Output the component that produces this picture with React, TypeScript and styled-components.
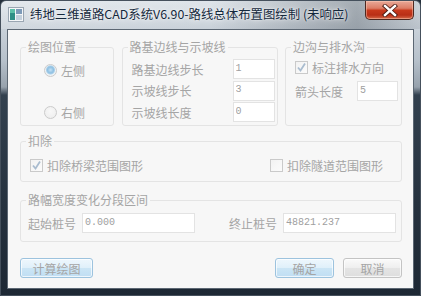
import React from 'react';
import styled, {createGlobalStyle} from "styled-components";

const GlobalStyle = createGlobalStyle`
  html, body {
    margin: 0;
    padding: 0;
    background: #25303c;
  }
  * {
    box-sizing: border-box;
  }
`

const TEXT_GREY = '#a5a5a5'

const AppIcon = () => (
    <svg width="16" height="15" viewBox="0 0 16 15">
        <rect x="0.5" y="0.5" width="15" height="14" fill="#f4f6f8" stroke="#9aa6b2"/>
        <rect x="2" y="2" width="5" height="11" fill="#2f8f86"/>
        <rect x="2" y="2" width="5" height="4" fill="#5cc0a8"/>
        <rect x="8" y="2" width="6" height="5" fill="#7c9ab8"/>
        <rect x="8" y="8" width="6" height="5" fill="#c3d0dc"/>
    </svg>
)

const CloseGlyph = () => (
    <svg width="16" height="13" viewBox="0 0 16 13">
        <path d="M3 2 L13 11 M13 2 L3 11" stroke="#4a1a12" strokeWidth="4.2" strokeLinecap="square"/>
        <path d="M3 2 L13 11 M13 2 L3 11" stroke="#ffffff" strokeWidth="2.4" strokeLinecap="square"/>
    </svg>
)

const CheckMark = () => (
    <svg width="11" height="11" viewBox="0 0 11 11">
        <path d="M2 5.5 L4.5 8.5 L9 1.5" fill="none" stroke="#a9bccf" strokeWidth="1.8"/>
    </svg>
)

const Radio: React.FC<{checked?: boolean, label: string}> = ({checked, label}) => (
    <StyledOption>
        <StyledRadio checked={checked}/>
        <span>{label}</span>
    </StyledOption>
)

const Check: React.FC<{checked?: boolean, label: string}> = ({checked, label}) => (
    <StyledOption>
        <StyledCheckBox>{checked && <CheckMark/>}</StyledCheckBox>
        <span>{label}</span>
    </StyledOption>
)

export default function App() {
    return (
        <>
            <GlobalStyle/>
            <StyledWindow>
                <StyledTitleBar>
                    <StyledIconWrap><AppIcon/></StyledIconWrap>
                    <StyledTitle>纬地三维道路CAD系统V6.90-路线总体布置图绘制 (未响应)</StyledTitle>
                    <StyledCloseButton><CloseGlyph/></StyledCloseButton>
                </StyledTitleBar>

                <StyledClient>
                    <StyledTopRow>
                        <StyledGroup width={94} height={86}>
                            <StyledLegend>绘图位置</StyledLegend>
                            <StyledRadioColumn>
                                <Radio checked label="左侧"/>
                                <Radio label="右侧"/>
                            </StyledRadioColumn>
                        </StyledGroup>

                        <StyledGroup width={156} height={86}>
                            <StyledLegend>路基边线与示坡线</StyledLegend>
                            <StyledFieldGrid>
                                <StyledLabel>路基边线步长</StyledLabel>
                                <StyledInput readOnly defaultValue="1"/>
                                <StyledLabel>示坡线步长</StyledLabel>
                                <StyledInput readOnly defaultValue="3"/>
                                <StyledLabel>示坡线长度</StyledLabel>
                                <StyledInput readOnly defaultValue="0"/>
                            </StyledFieldGrid>
                        </StyledGroup>

                        <StyledGroup width={117} height={86}>
                            <StyledLegend>边沟与排水沟</StyledLegend>
                            <StyledDrainBody>
                                <Check checked label="标注排水方向"/>
                                <StyledInlineField>
                                    <StyledLabel>箭头长度</StyledLabel>
                                    <StyledShortInput readOnly defaultValue="5"/>
                                </StyledInlineField>
                            </StyledDrainBody>
                        </StyledGroup>
                    </StyledTopRow>

                    <StyledGroup height={48} spaced={8}>
                        <StyledLegend>扣除</StyledLegend>
                        <StyledDeductRow>
                            <Check checked label="扣除桥梁范围图形"/>
                            <Check label="扣除隧道范围图形"/>
                        </StyledDeductRow>
                    </StyledGroup>

                    <StyledGroup height={49} spaced={11}>
                        <StyledLegend>路幅宽度变化分段区间</StyledLegend>
                        <StyledRangeRow>
                            <StyledInlineField>
                                <StyledLabel>起始桩号</StyledLabel>
                                <StyledWideInput readOnly defaultValue="0.000"/>
                            </StyledInlineField>
                            <StyledInlineField>
                                <StyledLabel>终止桩号</StyledLabel>
                                <StyledWideInput readOnly defaultValue="48821.237"/>
                            </StyledInlineField>
                        </StyledRangeRow>
                    </StyledGroup>

                    <StyledButtonRow>
                        <StyledButton variant="primary" width={73}>计算绘图</StyledButton>
                        <StyledRightButtons>
                            <StyledButton variant="primary" width={59}>确定</StyledButton>
                            <StyledButton width={59}>取消</StyledButton>
                        </StyledRightButtons>
                    </StyledButtonRow>
                </StyledClient>
            </StyledWindow>
        </>
    )
}

const StyledWindow = styled.div`
  width: 421px;
  height: 296px;
  display: flex;
  flex-direction: column;
  border: 1px solid #45505c;
  border-radius: 6px 6px 0 0;
  overflow: hidden;
  background: linear-gradient(to bottom,
    #dfe5ea 0px, #c9d1d9 28px, #b6c0ca 60px, #97a2ad 86px,
    #33414f 94px, #26323f 200px, #1d2834 100%);
  font-family: "Noto Sans CJK SC", "Noto Sans", sans-serif;
`

const StyledTitleBar = styled.div`
  height: 28px;
  flex-shrink: 0;
  display: flex;
  align-items: flex-start;
  background: linear-gradient(to right,
    rgba(255,255,255,0.15) 0%, rgba(255,255,255,0) 50%, rgba(60,70,80,0.35) 85%, rgba(60,70,80,0.1) 100%);
`

const StyledIconWrap = styled.div`
  margin: 6px 0 0 7px;
  width: 16px;
  height: 15px;
  display: flex;
`

const StyledTitle = styled.div`
  margin: 5px 0 0 6px;
  font-size: 12.4px;
  line-height: 16px;
  color: #14283c;
  white-space: nowrap;
  text-shadow: 0 0 6px rgba(255,255,255,0.9), 0 0 2px rgba(255,255,255,0.8);
`

const StyledCloseButton = styled.div`
  margin: 0 6px 0 auto;
  width: 49px;
  height: 19px;
  display: flex;
  align-items: center;
  justify-content: center;
  border: 1px solid #4e2820;
  border-top: none;
  border-radius: 0 0 5px 5px;
  background: linear-gradient(to bottom,
    #e9a998 0%, #dc7d66 40%, #c8391c 52%, #b92e16 78%, #d66a4a 100%);
  box-shadow: inset 0 0 0 1px rgba(255,210,190,0.45);
`

const StyledClient = styled.div`
  flex: 1;
  margin: 0 6px 6px;
  border: 1px solid #5c6773;
  background: #f7f7f7;
  padding: 10px 11px 0 12px;
  display: flex;
  flex-direction: column;
  color: ${TEXT_GREY};
  font-size: 12px;
`

const StyledTopRow = styled.div`
  display: flex;
  justify-content: space-between;
`

const StyledGroup = styled.fieldset<{width?: number, height: number, spaced?: number}>`
  margin: ${({spaced}) => spaced ? `${spaced}px 0 0` : '0'};
  padding: 0;
  min-width: 0;
  width: ${({width}) => width ? `${width}px` : 'auto'};
  height: ${({height}) => height}px;
  border: 1px solid #e4e4e4;
  border-radius: 3px;
`

const StyledLegend = styled.legend`
  margin-left: 5px;
  padding: 0 2px;
  font-size: 12px;
  line-height: 14px;
  color: ${TEXT_GREY};
`

const StyledOption = styled.div`
  display: flex;
  align-items: center;
  gap: 4px;
  height: 13px;
  line-height: 13px;
  white-space: nowrap;
`

const StyledRadio = styled.div<{checked?: boolean}>`
  width: 13px;
  height: 13px;
  border-radius: 50%;
  border: 1px solid #cbcbcb;
  background: ${({checked}) => checked
    ? 'radial-gradient(circle at 50% 45%, #c5e2f5 0, #8fc0e2 3px, #a9cfe9 4px, #eef3f6 5px, #f4f4f4 100%)'
    : 'radial-gradient(circle at 50% 40%, #f8f8f8 0, #ececec 100%)'};
  flex-shrink: 0;
`

const StyledCheckBox = styled.div`
  width: 13px;
  height: 13px;
  border: 1px solid #cacaca;
  background: linear-gradient(to bottom right, #f2f2f2, #fbfbfb);
  display: flex;
  align-items: center;
  justify-content: center;
  flex-shrink: 0;
`

const StyledRadioColumn = styled.div`
  display: flex;
  flex-direction: column;
  gap: 29px;
  padding: 10px 0 0 23px;
`

const StyledFieldGrid = styled.div`
  display: grid;
  grid-template-columns: 1fr 42px;
  grid-auto-rows: 20px;
  row-gap: 1.5px;
  padding: 5px 2px 0 9px;
  align-items: center;
`

const StyledLabel = styled.span`
  white-space: nowrap;
  color: ${TEXT_GREY};
`

const StyledInput = styled.input`
  width: 42px;
  height: 20px;
  margin: 0;
  padding: 0 0 2px 2px;
  border: 1px solid #e3e3e3;
  background: #fff;
  font-family: "Liberation Mono", monospace;
  font-size: 10px;
  color: #a0a0a0;
  outline: none;
`

const StyledShortInput = styled(StyledInput)`
  width: 41px;
  margin-left: auto;
`

const StyledWideInput = styled(StyledInput)`
  width: 113px;
`

const StyledDrainBody = styled.div`
  display: flex;
  flex-direction: column;
  gap: 7px;
  padding: 7px 3px 0 9px;
`

const StyledInlineField = styled.div`
  display: flex;
  align-items: center;
  gap: 6px;
`

const StyledDeductRow = styled.div`
  display: flex;
  justify-content: space-between;
  padding: 11px 18px 0 9px;
`

const StyledRangeRow = styled.div`
  display: flex;
  justify-content: space-between;
  padding: 6px 5px 0 7px;
`

const StyledButtonRow = styled.div`
  margin-top: 16px;
  display: flex;
  justify-content: space-between;
`

const StyledRightButtons = styled.div`
  display: flex;
  gap: 9px;
`

const StyledButton = styled.div<{variant?: 'primary' | 'default', width: number}>`
  width: ${({width}) => width}px;
  height: 20px;
  display: flex;
  align-items: center;
  justify-content: center;
  border-radius: 3px;
  font-size: 12px;
  color: ${TEXT_GREY};
  border: 1px solid ${({variant}) => variant === 'primary' ? '#9dc3de' : '#c4c4c4'};
  background: ${({variant}) => variant === 'primary'
    ? 'linear-gradient(to bottom, #eef7fd 0%, #e0f0fa 48%, #cbe5f5 52%, #c0def3 100%)'
    : 'linear-gradient(to bottom, #fafafa 0%, #efefef 48%, #e4e4e4 52%, #dedede 100%)'};
  box-shadow: inset 0 0 0 1px rgba(255,255,255,0.7);
`
